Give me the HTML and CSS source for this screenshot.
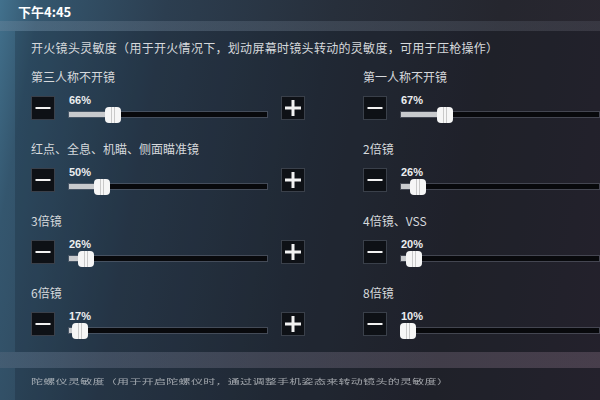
FILE: index.html
```html
<!DOCTYPE html>
<html lang="zh-CN">
  <head>
    <meta charset="UTF-8" />
    <meta name="viewport" content="width=device-width, initial-scale=1.0" />
    <title>灵敏度设置</title>
    <link rel="stylesheet" href="styles.css">
  </head>
  <body>
    <div class="status">下午4:45</div>
    <div class="divider"></div>

    <section class="panel">
      <h2 class="panel-title">开火镜头灵敏度（用于开火情况下，划动屏幕时镜头转动的灵敏度，可用于压枪操作）</h2>
      <div class="grid">
        <div class="item">
          <div class="item-label">第三人称不开镜</div>
          <div class="control">
            <button class="step minus"></button>
            <div class="slider">
              <span class="value">66%</span>
              <div class="track"><div class="fill" style="width: 22%"><span class="thumb"></span></div></div>
            </div>
            <button class="step plus"></button>
          </div>
        </div>
        <div class="item">
          <div class="item-label">第一人称不开镜</div>
          <div class="control">
            <button class="step minus"></button>
            <div class="slider">
              <span class="value">67%</span>
              <div class="track"><div class="fill" style="width: 22.33%"><span class="thumb"></span></div></div>
            </div>
            <button class="step plus"></button>
          </div>
        </div>

        <div class="item">
          <div class="item-label">红点、全息、机瞄、侧面瞄准镜</div>
          <div class="control">
            <button class="step minus"></button>
            <div class="slider">
              <span class="value">50%</span>
              <div class="track"><div class="fill" style="width: 16.67%"><span class="thumb"></span></div></div>
            </div>
            <button class="step plus"></button>
          </div>
        </div>
        <div class="item">
          <div class="item-label">2倍镜</div>
          <div class="control">
            <button class="step minus"></button>
            <div class="slider">
              <span class="value">26%</span>
              <div class="track"><div class="fill" style="width: 8.67%"><span class="thumb"></span></div></div>
            </div>
            <button class="step plus"></button>
          </div>
        </div>

        <div class="item">
          <div class="item-label">3倍镜</div>
          <div class="control">
            <button class="step minus"></button>
            <div class="slider">
              <span class="value">26%</span>
              <div class="track"><div class="fill" style="width: 8.67%"><span class="thumb"></span></div></div>
            </div>
            <button class="step plus"></button>
          </div>
        </div>
        <div class="item">
          <div class="item-label">4倍镜、VSS</div>
          <div class="control">
            <button class="step minus"></button>
            <div class="slider">
              <span class="value">20%</span>
              <div class="track"><div class="fill" style="width: 6.67%"><span class="thumb"></span></div></div>
            </div>
            <button class="step plus"></button>
          </div>
        </div>

        <div class="item">
          <div class="item-label">6倍镜</div>
          <div class="control">
            <button class="step minus"></button>
            <div class="slider">
              <span class="value">17%</span>
              <div class="track"><div class="fill" style="width: 5.67%"><span class="thumb"></span></div></div>
            </div>
            <button class="step plus"></button>
          </div>
        </div>
        <div class="item">
          <div class="item-label">8倍镜</div>
          <div class="control">
            <button class="step minus"></button>
            <div class="slider">
              <span class="value">10%</span>
              <div class="track"><div class="fill" style="width: 3.33%"><span class="thumb"></span></div></div>
            </div>
            <button class="step plus"></button>
          </div>
        </div>
      </div>
    </section>

    <div class="divider low"></div>

    <section class="panel next">
      <h2 class="panel-title faded">陀螺仪灵敏度（用于开启陀螺仪时，通过调整手机姿态来转动镜头的灵敏度）</h2>
    </section>
  </body>
</html>
```

FILE: styles.css
```css
/* Reset some default styles */
body,
h2 {
  margin: 0;
  padding: 0;
}

body {
  width: 600px;
  height: 400px;
  overflow: hidden;
  font-family: "Noto Sans CJK SC", "Noto Sans", sans-serif;
  color: #d6d9dc;
  background: linear-gradient(100deg, #42718d 0%, #34566e 6%, #2c3e50 25%, #272f3b 50%, #25262e 75%, #2b2731 100%);
}

/* Top status bar */
.status {
  height: 21px;
  padding-left: 18px;
  font-size: 13px;
  font-weight: bold;
  line-height: 23px;
  color: #fff;
}

.divider {
  height: 10px;
  background: linear-gradient(90deg, rgba(120, 140, 160, 0.32), rgba(110, 115, 130, 0.22));
}

.divider.low {
  height: 16px;
  background: linear-gradient(90deg, rgba(110, 120, 140, 0.28), rgba(125, 105, 125, 0.35));
}

/* Settings panel */
.panel {
  margin-left: 15px;
  padding: 9px 0 16px 16px;
  overflow: hidden;
  background-color: rgba(8, 12, 20, 0.18);
}

.panel.next {
  height: 27px;
  padding: 5px 0 0 16px;
}

.panel-title {
  font-size: 12px;
  font-weight: normal;
  line-height: 16px;
  letter-spacing: 0.3px;
  margin-bottom: 13px;
  white-space: nowrap;
}

.panel-title.faded {
  opacity: 0.7;
  transform: scaleY(0.6);
  transform-origin: left center;
  filter: blur(0.5px);
}

.grid {
  display: grid;
  grid-template-columns: 332px 332px;
  row-gap: 21px;
}

.item-label {
  font-size: 12px;
  line-height: 16px;
  margin-bottom: 11px;
  white-space: nowrap;
}

.control {
  display: flex;
  align-items: flex-start;
}

/* Minus / plus buttons */
.step {
  position: relative;
  width: 24px;
  height: 24px;
  padding: 0;
  border: 1px solid #3a404a;
  background-color: #0e1116;
  flex-shrink: 0;
}

.step::before,
.step::after {
  content: "";
  position: absolute;
  left: 50%;
  top: 50%;
  background-color: #f2f2f2;
  transform: translate(-50%, -50%);
}

.minus::before {
  width: 15px;
  height: 2px;
}

.plus::before {
  width: 16px;
  height: 3px;
}

.plus::after {
  width: 3px;
  height: 16px;
}

/* Slider */
.slider {
  width: 198px;
  flex-shrink: 0;
  margin: -2px 14px 0 14px;
}

.value {
  display: block;
  font-family: "Liberation Sans", Arial, sans-serif;
  font-size: 11px;
  font-weight: bold;
  line-height: 12px;
  color: #eceef0;
}

.track {
  height: 5px;
  margin-top: 6px;
  background-color: #08090c;
  box-shadow: 0 0 0 1px rgba(110, 116, 128, 0.45);
}

.fill {
  position: relative;
  height: 100%;
  background-color: #c8cacd;
}

.thumb {
  position: absolute;
  right: -8px;
  top: 50%;
  width: 16px;
  height: 16px;
  margin-top: -8px;
  border-radius: 4px;
  background: linear-gradient(90deg, #f6f6f6 6px, #c9c9c9 6px 7px, #f6f6f6 7px 9px, #c9c9c9 9px 10px, #f6f6f6 10px);
}
```
